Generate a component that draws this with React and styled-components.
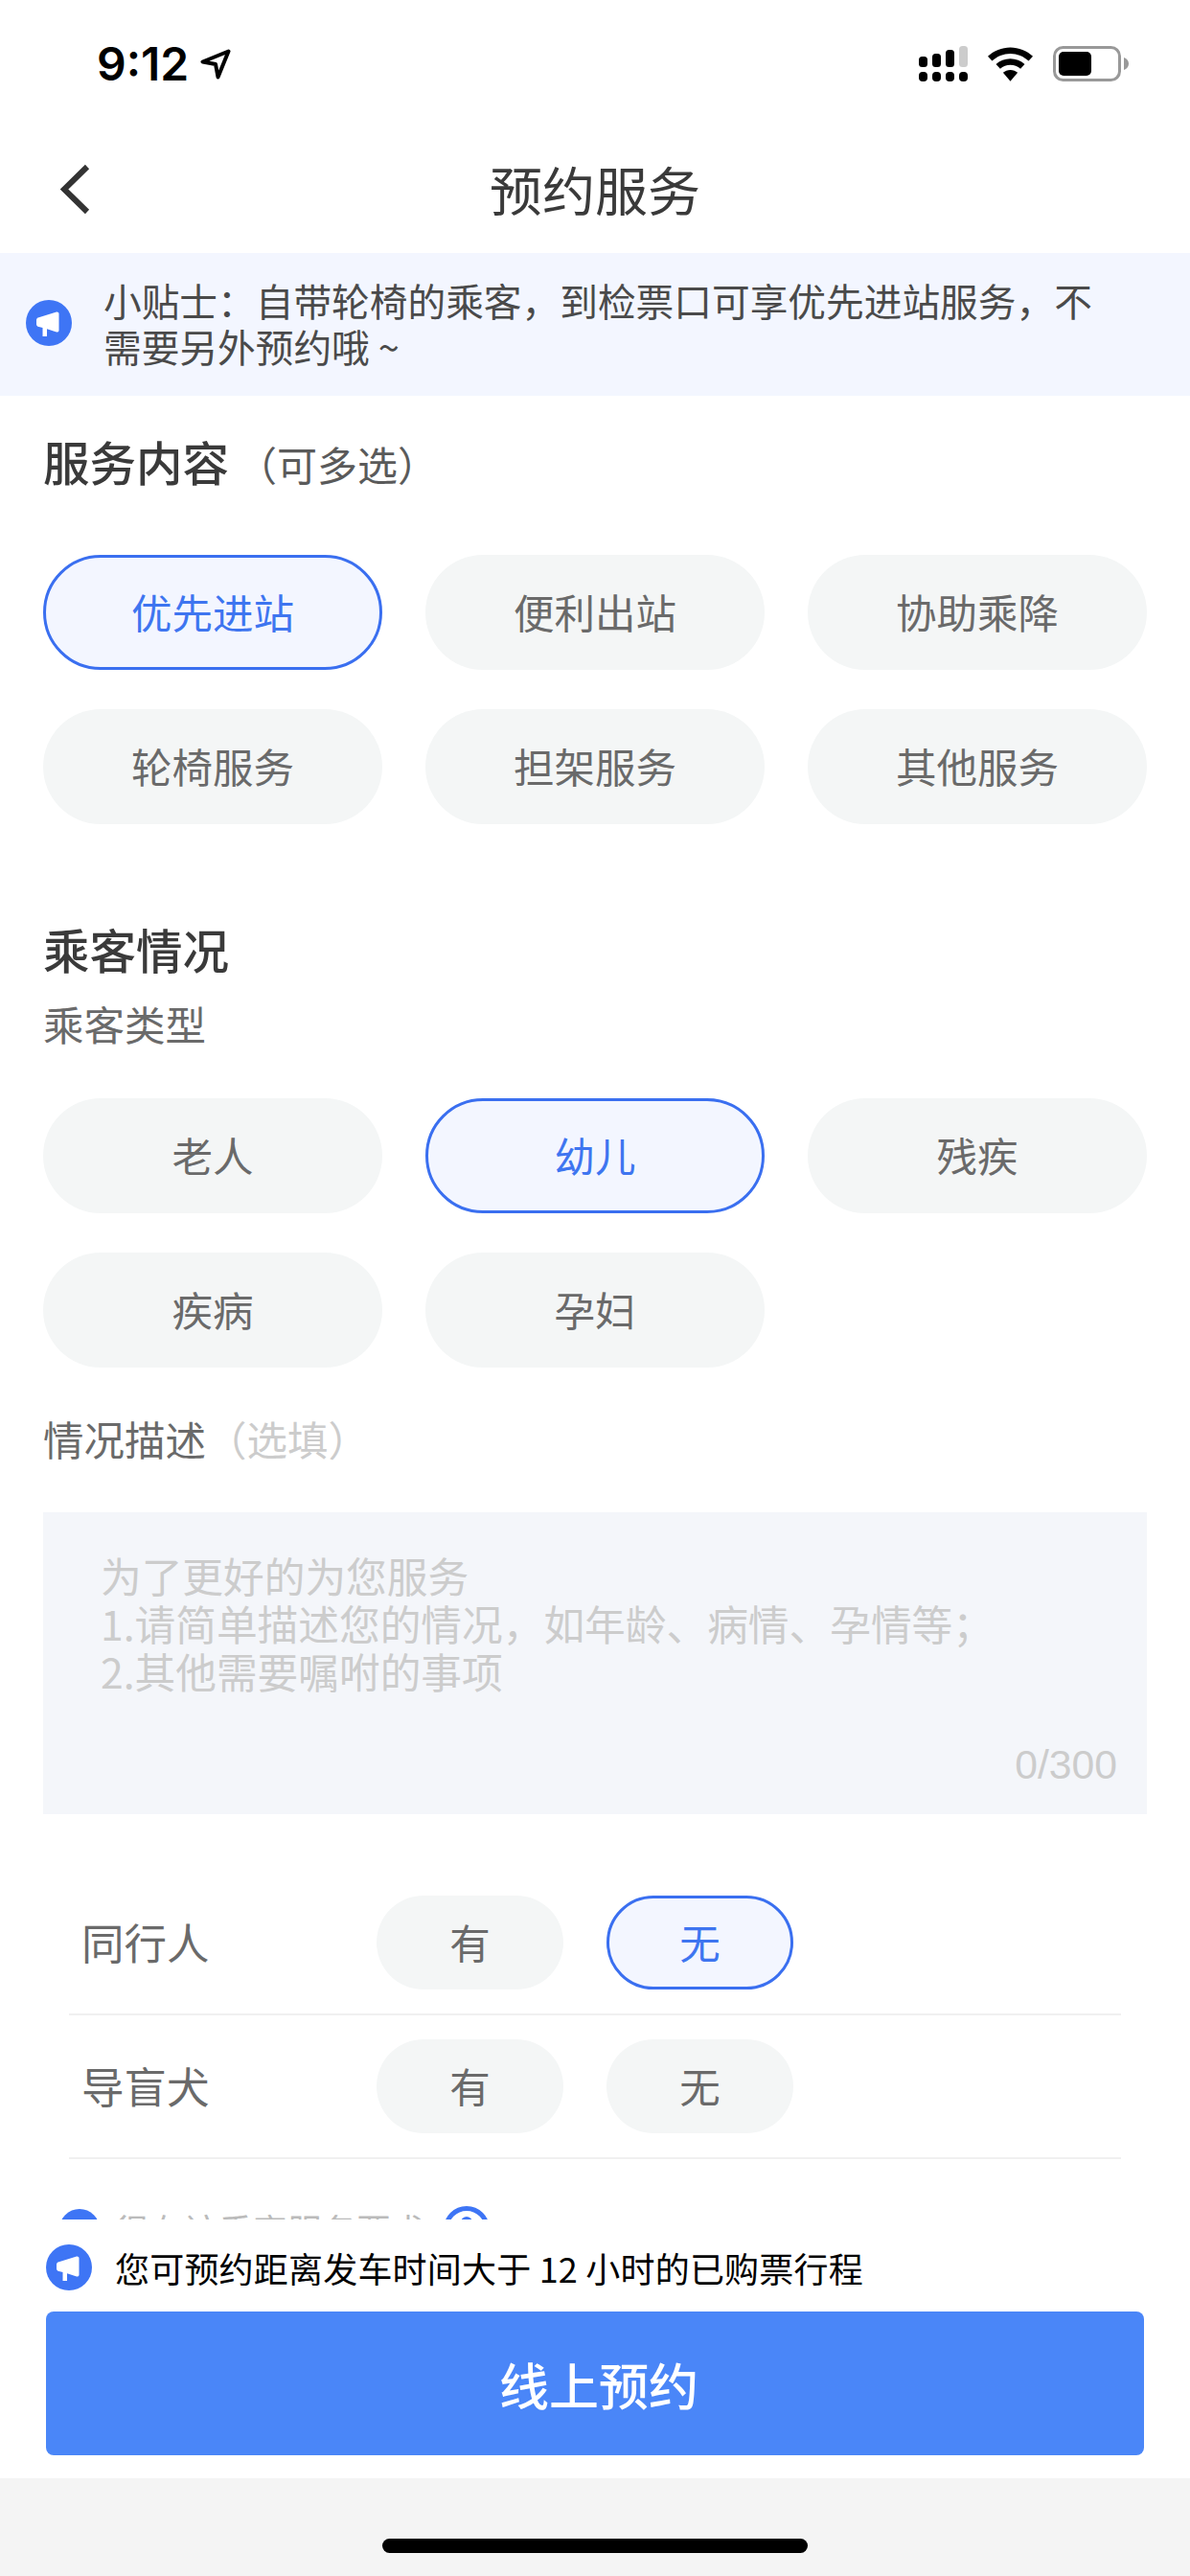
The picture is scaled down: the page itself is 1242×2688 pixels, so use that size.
import React from 'react';
import styled, { createGlobalStyle } from 'styled-components';

const Global = createGlobalStyle`
  html, body {
    margin: 0;
    padding: 0;
    background: #fff;
  }
  * { box-sizing: border-box; }
`;

const FONT = `"Noto Sans CJK SC", "Liberation Sans", sans-serif`;

const Page = styled.div`
  width: 1242px;
  height: 2688px;
  display: flex;
  flex-direction: column;
  overflow: hidden;
  background: #fff;
  font-family: ${FONT};
  font-weight: 400;
`;

const StatusBar = styled.div`
  height: 134px;
  flex: none;
  display: flex;
  justify-content: space-between;
  align-items: flex-start;
  padding: 42px 64px 0 101px;
`;

const Time = styled.div`
  display: flex;
  align-items: center;
  gap: 12px;
  font-family: Inter, sans-serif;
  font-size: 48px;
  line-height: 50px;
  font-weight: 600;
  color: #000;
`;

const StatusIcons = styled.div`
  display: flex;
  align-items: center;
  gap: 21px;
  padding-top: 6px;
`;

const NavBar = styled.div`
  height: 130px;
  flex: none;
  position: relative;
  display: flex;
  align-items: center;
  justify-content: center;
  padding-bottom: 6px;
`;

const BackButton = styled.div`
  position: absolute;
  left: 58px;
  top: 34px;
  display: flex;
`;

const NavTitle = styled.div`
  font-size: 55px;
  color: #3a3a3a;
`;

const Tip = styled.div`
  flex: none;
  height: 149px;
  background: #f3f6ff;
  display: flex;
  align-items: center;
  gap: 33px;
  padding: 0 90px 3px 27px;
`;

const TipText = styled.div`
  font-size: 39.7px;
  line-height: 48px;
  color: #4a4a4a;
`;

const Content = styled.div`
  flex: 1;
  min-height: 0;
  overflow: hidden;
  padding: 0 45px;
`;

const SectionHead = styled.div`
  display: flex;
  align-items: baseline;
  height: 70px;
  margin-top: ${({ $top }) => $top}px;
  line-height: 70px;
`;

const SectionTitle = styled.span`
  font-size: 48.5px;
  font-weight: 500;
  color: #3a3a3a;
`;

const SectionHint = styled.span`
  font-size: 42px;
  color: #5a5a5a;
  margin-left: 8px;
`;

const ChipGrid = styled.div`
  display: grid;
  grid-template-columns: repeat(3, 354px);
  column-gap: 45px;
  row-gap: 41px;
  margin-top: ${({ $top }) => $top}px;
`;

const Chip = styled.div`
  height: ${({ $small }) => ($small ? 98 : 120)}px;
  width: ${({ $small }) => ($small ? '195px' : 'auto')};
  border-radius: 60px;
  display: flex;
  align-items: center;
  justify-content: center;
  font-size: 42.5px;
  padding-bottom: 3px;
  background: ${({ $on }) => ($on ? '#f3f6ff' : '#f4f6f6')};
  border: 3px solid ${({ $on }) => ($on ? '#3a6ff0' : 'transparent')};
  color: ${({ $on }) => ($on ? '#3e75f0' : '#6a6a6a')};
`;

const SubLabel = styled.div`
  font-size: 42.5px;
  line-height: 60px;
  color: #6a6a6a;
  margin-top: ${({ $top }) => $top}px;
`;

const Optional = styled.span`
  color: #ccc;
`;

const TextBox = styled.div`
  position: relative;
  height: 315px;
  margin-top: 47px;
  padding: 40px 60px 0;
  background: #f4f6fa;
  font-size: 42.7px;
  line-height: 50px;
  color: #ccc;
`;

const Counter = styled.div`
  position: absolute;
  right: 31px;
  bottom: 27px;
  font-family: "Liberation Sans", sans-serif;
`;

const Rows = styled.div`
  margin-top: 60px;
  padding: 0 27px;
`;

const Row = styled.div`
  height: 150px;
  display: flex;
  align-items: center;
  gap: 45px;
  border-bottom: 2px solid #f0f0f0;
`;

const RowLabel = styled.div`
  width: 276px;
  padding-left: 13px;
  padding-bottom: 3px;
  font-size: 44.5px;
  color: #6a6a6a;
`;

const Agree = styled.div`
  display: flex;
  align-items: center;
  gap: 16px;
  margin-top: 47px;
  padding-left: 17px;
  font-size: 36px;
  color: #bbb;
`;

const Footer = styled.div`
  flex: none;
  height: 270px;
  background: #fff;
  padding: 26px 48px 0;
`;

const FooterNote = styled.div`
  display: flex;
  align-items: center;
  gap: 24px;
  height: 48px;
  font-size: 36px;
  letter-spacing: .2px;
  color: #000;
`;

const SubmitButton = styled.div`
  height: 150px;
  margin-top: 22px;
  border-radius: 8px;
  background: #4a86f8;
  color: #fff;
  font-size: 52px;
  font-weight: 500;
  display: flex;
  align-items: center;
  justify-content: center;
  padding-left: 8px;
`;

const HomeArea = styled.div`
  flex: none;
  height: 102px;
  background: #f4f4f4;
  display: flex;
  justify-content: center;
  padding-top: 63px;
`;

const HomeBar = styled.div`
  width: 444px;
  height: 15px;
  border-radius: 8px;
  background: #000;
`;

function Megaphone() {
  return (
    <svg width="48" height="48" viewBox="0 0 48 48" style={{ flex: 'none' }}>
      <circle cx="24" cy="24" r="24" fill="#3e75f5" />
      <path d="M11 21c0-1.400 1-2.500 2.500-2.800L32 12.500c1.200-.3 2.500.5 2.500 1.800v17.500c0 1.300-1.300 2-2.500 1.700L22 30.300V38h-4.500v-9l-4-1c-1.500-.3-2.500-1.400-2.500-2.800z" fill="#fff" />
    </svg>
  );
}

function Signal() {
  const bars = [
    [0, 11, 1],
    [14, 14, 1],
    [28, 18, 1],
    [42, 22, .2],
  ];
  return (
    <svg width="51" height="37" viewBox="0 0 51 37">
      {bars.map(([x, h, o]) => (
        <rect key={x} x={x} y={22 - h} width="9" height={h} rx="3.500" fill="#000" opacity={o} />
      ))}
      {bars.map(([x]) => (
        <rect key={x} x={x} y="27" width="9" height="10" rx="4" fill="#000" />
      ))}
    </svg>
  );
}

function Wifi() {
  return (
    <svg width="47" height="36" viewBox="0 0 48 36">
      <path d="M24 0C15 0 6.500 3.500 0 9.500l4.500 5C9.800 9.600 16.700 6.700 24 6.700s14.200 2.900 19.500 7.800l4.500-5C41.500 3.500 33 0 24 0z" fill="#000" />
      <path d="M24 12c-5.800 0-11.200 2.200-15.300 5.900l4.500 5C16.200 20.300 20 18.800 24 18.800s7.800 1.500 10.800 4.100l4.500-5C35.200 14.200 29.800 12 24 12z" fill="#000" />
      <path d="M24 24c-3 0-5.700 1.100-7.800 3L24 36l7.800-9c-2.100-1.900-4.800-3-7.800-3z" fill="#000" />
    </svg>
  );
}

function Battery() {
  return (
    <svg width="79" height="37" viewBox="0 0 79 37">
      <rect x="1.500" y="1.500" width="68" height="34" rx="9" fill="none" stroke="#999" strokeWidth="3" />
      <rect x="6" y="6" width="34" height="25" rx="5" fill="#000" />
      <path d="M74 12c3 1 5 3.500 5 6.500S77 24 74 25z" fill="#999" />
    </svg>
  );
}

function Arrow() {
  return (
    <svg width="32" height="32" viewBox="0 0 32 32">
      <path d="M29.500 2.500 2.500 13.500l13.500 2.500 2.500 13.500z" fill="none" stroke="#000" strokeWidth="4" strokeLinejoin="round" />
    </svg>
  );
}

function Back() {
  return (
    <svg width="40" height="60" viewBox="0 0 40 60">
      <path d="M33 6 9 29.500 33 53" fill="none" stroke="#333" strokeWidth="6" />
    </svg>
  );
}

function Check() {
  return (
    <svg width="42" height="42" viewBox="0 0 42 42" style={{ flex: 'none' }}>
      <circle cx="21" cy="21" r="21" fill="#3e75f5" />
    </svg>
  );
}

function Info() {
  return (
    <svg width="48" height="48" viewBox="0 0 48 48" style={{ flex: 'none', marginLeft: 3 }}>
      <circle cx="24" cy="24" r="21.500" fill="none" stroke="#3e75f5" strokeWidth="5" />
      <circle cx="24" cy="17" r="6" fill="#3e75f5" />
    </svg>
  );
}

const services = ['优先进站', '便利出站', '协助乘降', '轮椅服务', '担架服务', '其他服务'];
const passengers = ['老人', '幼儿', '残疾', '疾病', '孕妇'];
const extras = [
  { label: '同行人', on: '无' },
  { label: '导盲犬', on: null },
];

export default function App() {
  return (
    <Page>
      <Global />
      <StatusBar>
        <Time>9:12<Arrow /></Time>
        <StatusIcons>
          <Signal />
          <Wifi />
          <Battery />
        </StatusIcons>
      </StatusBar>
      <NavBar>
        <BackButton><Back /></BackButton>
        <NavTitle>预约服务</NavTitle>
      </NavBar>
      <Tip>
        <Megaphone />
        <TipText>小贴士：自带轮椅的乘客，到检票口可享优先进站服务，不需要另外预约哦 ~</TipText>
      </Tip>
      <Content>
        <SectionHead $top={33}>
          <SectionTitle>服务内容</SectionTitle>
          <SectionHint>（可多选）</SectionHint>
        </SectionHead>
        <ChipGrid $top={63}>
          {services.map((s, i) => <Chip key={s} $on={i === 0}>{s}</Chip>)}
        </ChipGrid>
        <SectionHead $top={95}>
          <SectionTitle>乘客情况</SectionTitle>
        </SectionHead>
        <SubLabel $top={13}>乘客类型</SubLabel>
        <ChipGrid $top={48}>
          {passengers.map((s, i) => <Chip key={s} $on={i === 1}>{s}</Chip>)}
        </ChipGrid>
        <SubLabel $top={44}>情况描述<Optional>（选填）</Optional></SubLabel>
        <TextBox>
          为了更好的为您服务<br />
          1.请简单描述您的情况，如年龄、病情、孕情等；<br />
          2.其他需要嘱咐的事项
          <Counter>0/300</Counter>
        </TextBox>
        <Rows>
          {extras.map((row) => (
            <Row key={row.label}>
              <RowLabel>{row.label}</RowLabel>
              <Chip $small>有</Chip>
              <Chip $small $on={row.on === '无'}>无</Chip>
            </Row>
          ))}
        </Rows>
        <Agree>
          <Check />
          很有该乘客服务要求
          <Info />
        </Agree>
      </Content>
      <Footer>
        <FooterNote>
          <Megaphone />
          您可预约距离发车时间大于 12 小时的已购票行程
        </FooterNote>
        <SubmitButton>线上预约</SubmitButton>
      </Footer>
      <HomeArea>
        <HomeBar />
      </HomeArea>
    </Page>
  );
}
